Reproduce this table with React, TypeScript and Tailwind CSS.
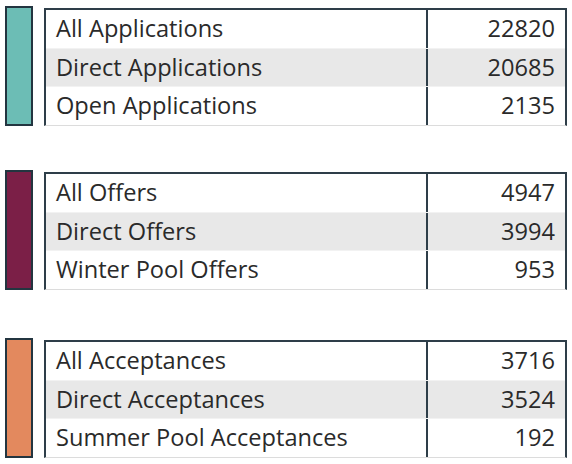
const groups = [
  {
    color: "bg-[#6cbdb5]",
    gap: "mt-[6px]",
    rows: [
      ["All Applications", "22820"],
      ["Direct Applications", "20685"],
      ["Open Applications", "2135"],
    ],
  },
  {
    color: "bg-[#7b1f47]",
    gap: "mt-[44px]",
    rows: [
      ["All Offers", "4947"],
      ["Direct Offers", "3994"],
      ["Winter Pool Offers", "953"],
    ],
  },
  {
    color: "bg-[#e3895e]",
    gap: "mt-[48px]",
    rows: [
      ["All Acceptances", "3716"],
      ["Direct Acceptances", "3524"],
      ["Summer Pool Acceptances", "192"],
    ],
  },
];

export default function App() {
  return (
    <div className="h-[464px] w-[572px] overflow-hidden bg-white pl-[5px] pr-[5px] font-['Open_Sans',sans-serif] text-[23.6px] text-[#2a2a2a]">
      {groups.map((g, i) => (
        <div key={i} className={`flex h-[120px] gap-[11px] ${g.gap}`}>
          <div className={`w-[28px] shrink-0 border-2 border-[#233540] ${g.color}`} />
          <div className="mt-[2px] flex flex-1 flex-col border-x-2 border-t-2 border-b border-[#2e3e49] border-b-[#dcdcdc]">
            {g.rows.map(([label, n], j) => (
              <div
                key={j}
                className={`flex flex-1 items-center ${j === 1 ? "bg-[#e8e8e8]" : "bg-white"} ${j > 0 ? "border-t border-[#f2f2f2]" : ""}`}
              >
                <div className="flex-1 whitespace-nowrap px-[10px] leading-none">{label}</div>
                <div className="flex h-full w-[139px] items-center justify-end border-l-2 border-[#2e3e49] px-[10px] leading-none">
                  {n}
                </div>
              </div>
            ))}
          </div>
        </div>
      ))}
    </div>
  );
}
